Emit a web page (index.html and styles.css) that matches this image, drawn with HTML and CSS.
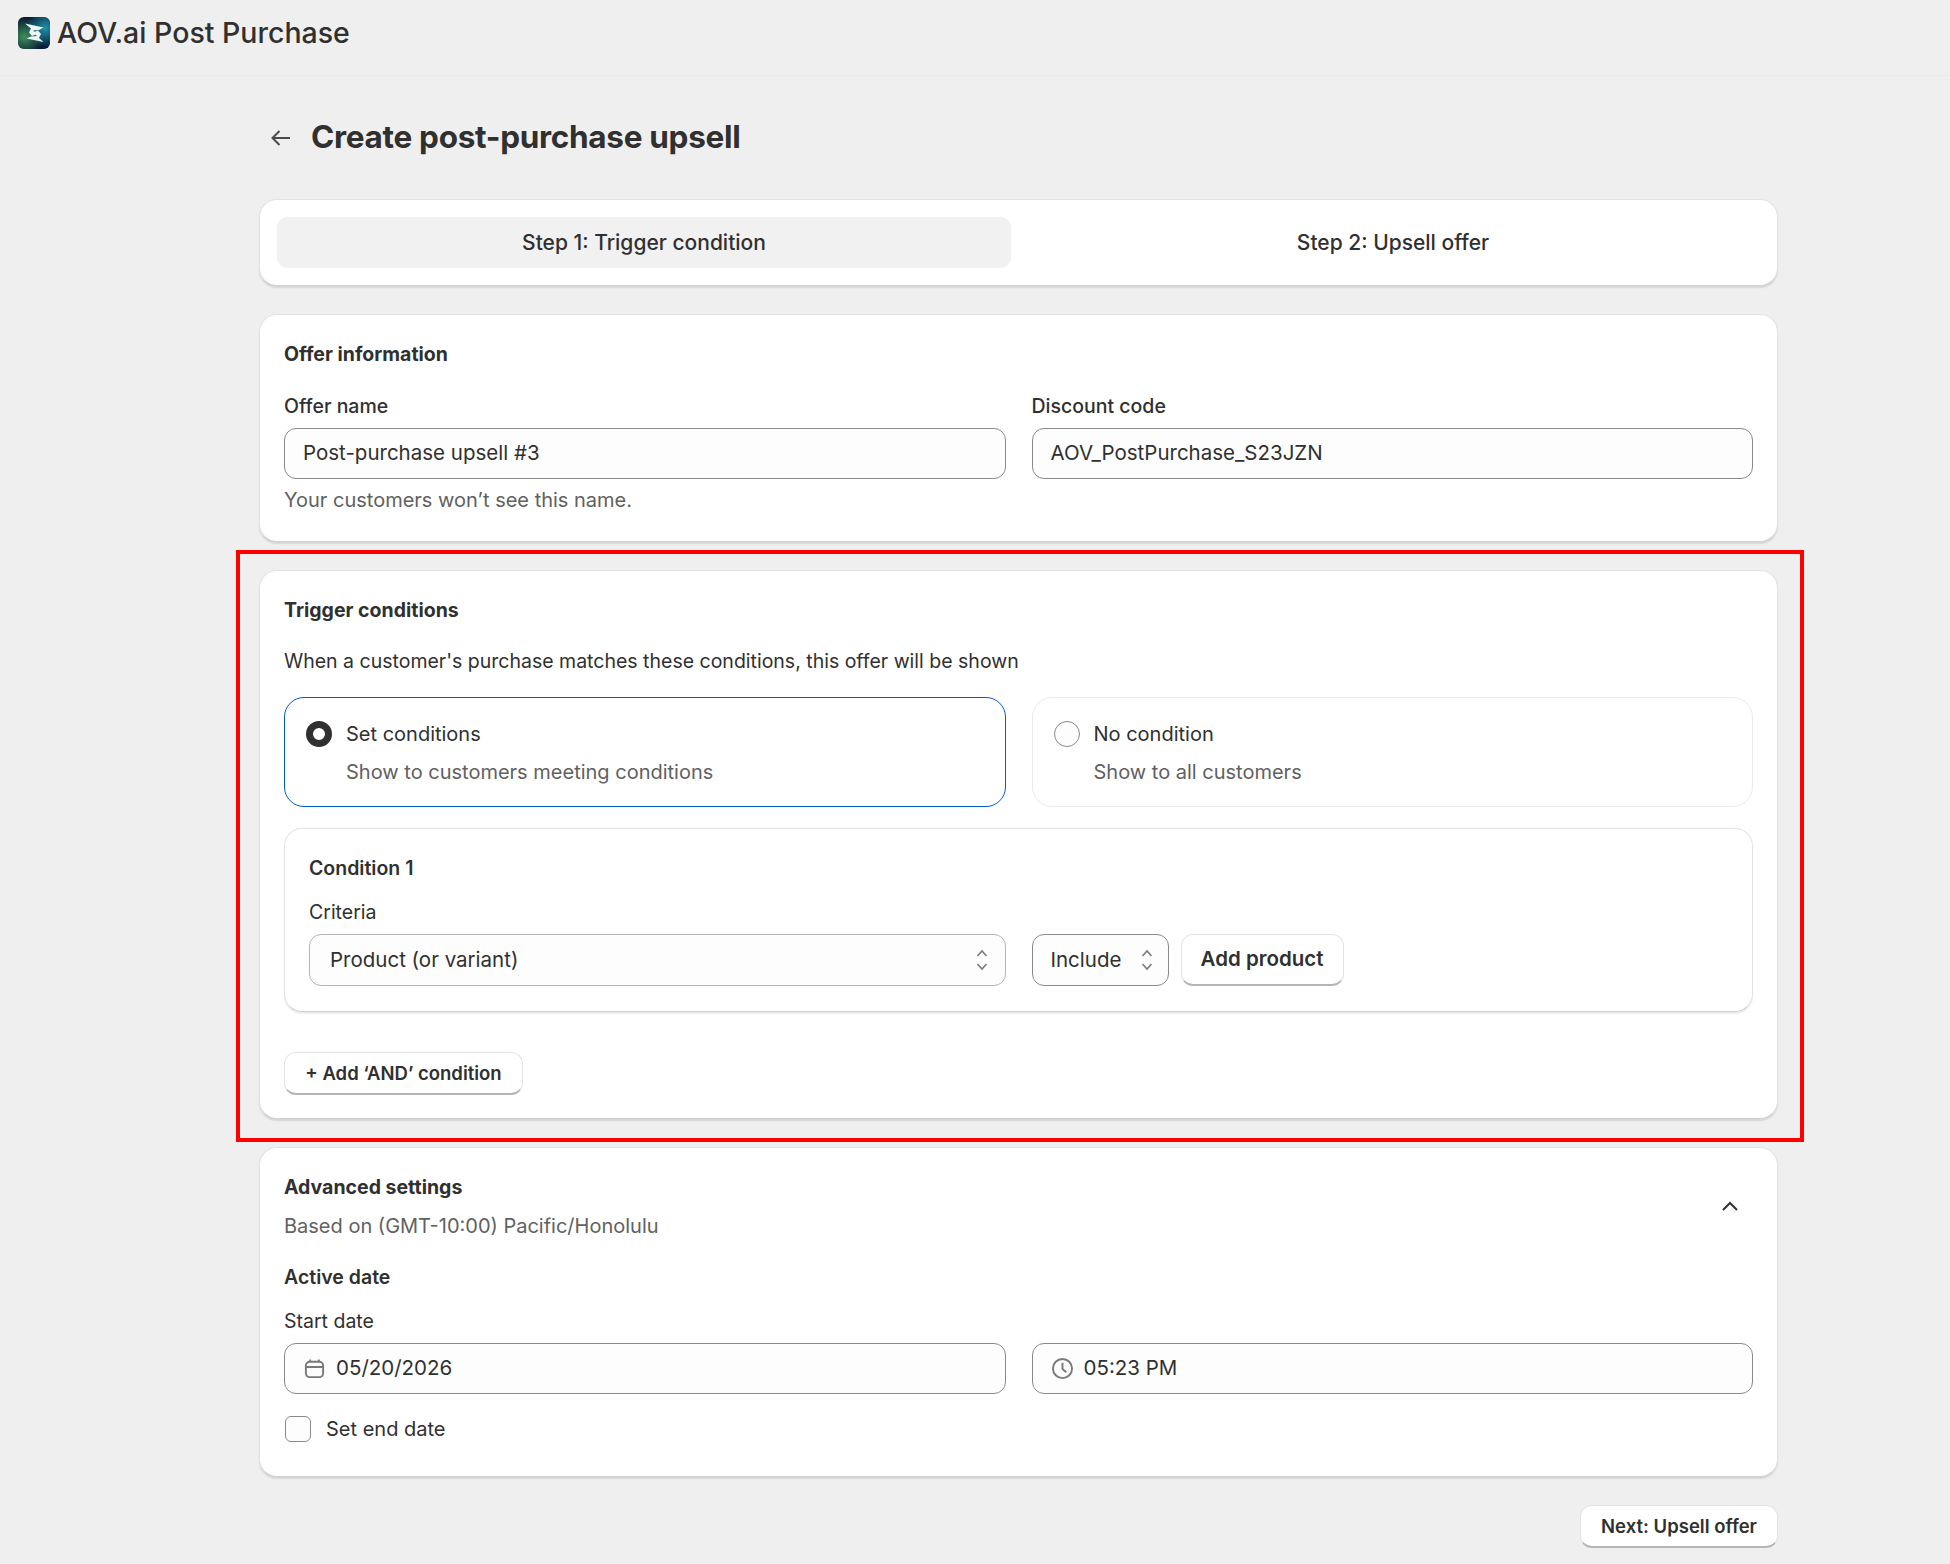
FILE: index.html
```html
<!DOCTYPE html>
<html lang="en">
<head>
  <meta charset="UTF-8">
  <meta name="viewport" content="width=device-width, initial-scale=1">
  <title>AOV.ai Post Purchase</title>
  <link rel="stylesheet" href="styles.css">
</head>
<body>

<header class="app-bar">
  <svg class="app-logo" viewBox="0 0 32 32" aria-hidden="true">
    <defs>
      <radialGradient id="logo-green" cx="0.2" cy="0.62" r="0.6">
        <stop offset="0" stop-color="#3f8f5a"/>
        <stop offset="1" stop-color="#3f8f5a" stop-opacity="0"/>
      </radialGradient>
      <radialGradient id="logo-blue" cx="0.85" cy="0.35" r="0.6">
        <stop offset="0" stop-color="#1f93a8"/>
        <stop offset="1" stop-color="#1f93a8" stop-opacity="0"/>
      </radialGradient>
    </defs>
    <rect width="32" height="32" rx="6" fill="#071a33"/>
    <rect width="32" height="32" rx="6" fill="url(#logo-green)"/>
    <rect width="32" height="32" rx="6" fill="url(#logo-blue)"/>
    <path d="M7 6.5 L25.5 10.5 L21 13 L15 13.5 L19.5 17 L14 19 L11 15.5 L13 11.5 Z" fill="#eef6f5"/>
    <path d="M25.5 25 L8.5 21.5 L13 19.5 L19 19 L15 15.5 L20 13.5 L23 17 L21 21 Z" fill="#eef6f5"/>
  </svg>
  <span class="app-name">AOV.ai Post Purchase</span>
</header>

<main class="page">
  <div class="page-head">
    <svg class="back-icon" viewBox="0 0 24 24" aria-hidden="true"><path d="M21 12H4M10.5 5 3.5 12l7 7"/></svg>
    <h1 class="page-title">Create post-purchase upsell</h1>
  </div>

  <section class="card steps">
    <div class="step step-active">Step 1: Trigger condition</div>
    <div class="step">Step 2: Upsell offer</div>
  </section>

  <section class="card offer-card">
    <h2 class="card-title">Offer information</h2>
    <div class="two-col offer-fields">
      <div>
        <label class="field-label">Offer name</label>
        <div class="input">Post-purchase upsell #3</div>
        <p class="help">Your customers won’t see this name.</p>
      </div>
      <div>
        <label class="field-label">Discount code</label>
        <div class="input">AOV_PostPurchase_S23JZN</div>
      </div>
    </div>
  </section>

  <section class="card trigger-card">
    <h2 class="card-title">Trigger conditions</h2>
    <p class="trigger-text">When a customer's purchase matches these conditions, this offer will be shown</p>
    <div class="two-col">
      <div class="choice choice-on">
        <span class="radio radio-on"></span>
        <div>
          <div class="choice-name">Set conditions</div>
          <div class="choice-sub">Show to customers meeting conditions</div>
        </div>
      </div>
      <div class="choice">
        <span class="radio"></span>
        <div>
          <div class="choice-name">No condition</div>
          <div class="choice-sub">Show to all customers</div>
        </div>
      </div>
    </div>

    <div class="condition">
      <h3 class="condition-title">Condition 1</h3>
      <label class="field-label criteria-label">Criteria</label>
      <div class="two-col">
        <div class="select select-wide">
          <span>Product (or variant)</span>
          <svg class="updown" viewBox="0 0 16 26" aria-hidden="true"><path d="M3.5 9 8 4l4.500 5M3.500 17 8 22l4.500-5"/></svg>
        </div>
        <div class="condition-actions">
          <div class="select select-small">
            <span>Include</span>
            <svg class="updown" viewBox="0 0 16 26" aria-hidden="true"><path d="M3.500 9 8 4l4.500 5M3.500 17 8 22l4.500-5"/></svg>
          </div>
          <button class="btn btn-add">Add product</button>
        </div>
      </div>
    </div>

    <button class="btn btn-and">+ Add ‘AND’ condition</button>
  </section>

  <section class="card advanced-card">
    <div class="advanced-head">
      <div>
        <h2 class="card-title">Advanced settings</h2>
        <p class="timezone">Based on (GMT-10:00) Pacific/Honolulu</p>
      </div>
      <svg class="chevron" viewBox="0 0 18 12" aria-hidden="true"><path d="M2 10 9 3l7 7"/></svg>
    </div>
    <h3 class="active-title">Active date</h3>
    <label class="field-label start-label">Start date</label>
    <div class="two-col">
      <div class="input input-icon">
        <svg class="field-icon" viewBox="0 0 24 24" aria-hidden="true"><rect x="3" y="5" width="18" height="16" rx="4"/><path d="M3 10.500h18M7.500 5V2.500M16.500 5V2.500"/></svg>
        05/20/2026
      </div>
      <div class="input input-icon">
        <svg class="field-icon" viewBox="0 0 24 24" aria-hidden="true"><circle cx="12" cy="12" r="10"/><path d="M12 6v6.500l4 3.500"/></svg>
        05:23 PM
      </div>
    </div>
    <label class="check-row">
      <span class="check-box"></span>
      Set end date
    </label>
  </section>

  <div class="page-foot">
    <button class="btn btn-next">Next: Upsell offer</button>
  </div>
</main>

<div class="highlight"></div>

</body>
</html>
```

FILE: styles.css
```css
* {
  box-sizing: border-box;
}

body {
  font-family: Inter, 'Noto Sans', sans-serif;
  font-size: 19.5px;
  line-height: 30px;
  color: #303030;
  background: #efefef;
  margin: 0;
  height: 1564px;
  overflow: hidden;
  position: relative;
}

h1, h2, h3, p {
  margin: 0;
}

.app-bar {
  height: 76px;
  border-bottom: 1px solid #ebebeb;
  display: flex;
  align-items: center;
  padding: 0 0 10px 18px;
  gap: 7px;
}

.app-logo {
  width: 32px;
  height: 32px;
  flex: none;
}

.app-name {
  font-size: 28.500px;
  font-weight: 500;
  line-height: 34px;
}

.page {
  margin: 0 172px 0 259px;
}

.page-head {
  height: 123px;
  display: flex;
  align-items: center;
  padding-left: 10px;
  gap: 18px;
}

.back-icon {
  width: 24px;
  height: 24px;
  fill: none;
  stroke: #4a4a4a;
  stroke-width: 2;
}

.page-title {
  font-size: 31.500px;
  font-weight: 700;
  line-height: 40px;
  letter-spacing: -0.3px;
  margin-top: -2px;
}

.card {
  background: #fff;
  border: 1.5px solid #e3e3e3;
  border-bottom-color: #d0d0d0;
  border-radius: 18px;
  box-shadow: 0 1.500px 1.500px rgba(0, 0, 0, 0.1);
  padding: 23.500px 24px 25px;
  margin-bottom: 28px;
}

.card-title {
  font-size: 19.500px;
  font-weight: 650;
}

.two-col {
  display: grid;
  grid-template-columns: 1fr 1fr;
  gap: 26px;
}

.steps {
  display: grid;
  grid-template-columns: 1fr 1fr;
  gap: 15px;
  padding: 17px 17px 17px;
  height: 87px;
}

.step {
  border-radius: 10px;
  display: flex;
  align-items: center;
  justify-content: center;
  font-weight: 550;
  font-size: 21px;
}

.step-active {
  background: #f1f1f1;
}

.offer-card {
  height: 228px;
}

.offer-fields {
  margin-top: 22px;
}

.field-label {
  display: block;
  font-weight: 500;
}

.input {
  height: 51px;
  margin-top: 7px;
  border: 1.500px solid #8a8a8a;
  border-radius: 12px;
  background: #fdfdfd;
  padding: 0 18px;
  display: flex;
  align-items: center;
  font-size: 20.500px;
}

.help {
  margin-top: 6px;
  color: #616161;
  font-size: 20px;
}

.trigger-card {
  height: 549px;
  margin-bottom: 28px;
}

.trigger-text {
  margin-top: 21px;
  margin-bottom: 21px;
}

.choice {
  height: 110px;
  border: 1.500px solid #ebebeb;
  border-radius: 20px;
  padding: 21px 21px;
  display: flex;
  gap: 14px;
}

.choice-on {
  border-color: #005bd3;
}

.radio {
  width: 26px;
  height: 26px;
  margin-top: 2px;
  flex: none;
  border-radius: 50%;
  border: 1.500px solid #8a8a8a;
  background: #fdfdfd;
}

.radio-on {
  border: 7px solid #303030;
  background: #fff;
}

.choice-name {
  font-size: 20px;
}

.choice-sub {
  margin-top: 8px;
  color: #616161;
  font-size: 20px;
}

.condition {
  margin-top: 21px;
  height: 184px;
  border: 1.500px solid #e3e3e3;
  border-bottom-color: #d0d0d0;
  border-radius: 18px;
  box-shadow: 0 1.500px 1.500px rgba(0, 0, 0, 0.08);
  padding: 24px 24px 0;
}

.condition-title {
  font-size: 19.500px;
  font-weight: 600;
}

.criteria-label {
  margin-top: 14px;
  font-weight: 400;
}

.select {
  height: 52px;
  margin-top: 7px;
  border-radius: 12px;
  background: #fdfdfd;
  display: flex;
  align-items: center;
  justify-content: space-between;
  font-size: 20.500px;
}

.select-wide {
  border: 1.500px solid #b5b5b5;
  padding: 0 15px 0 20px;
}

.select-small {
  width: 137px;
  flex: none;
  border: 1.500px solid #8a8a8a;
  padding: 0 13px 0 18px;
}

.updown {
  width: 16px;
  height: 26px;
  fill: none;
  stroke: #7a7a7a;
  stroke-width: 1.600;
}

.condition-actions {
  display: flex;
  gap: 12px;
}

.btn {
  font: inherit;
  font-weight: 600;
  color: #303030;
  background: #fff;
  border: 1.500px solid #e3e3e3;
  border-bottom: 2.500px solid #b5b5b5;
  border-radius: 12px;
  padding: 0;
}

.btn-add {
  width: 163px;
  height: 52px;
  margin-top: 7px;
  font-size: 20.500px;
}

.btn-and {
  width: 239px;
  height: 43px;
  margin-top: 40px;
  font-size: 18.500px;
}

.advanced-card {
  height: 330px;
  margin-bottom: 28px;
}

.advanced-head {
  display: flex;
  align-items: center;
  justify-content: space-between;
  padding-right: 14px;
}

.timezone {
  margin-top: 9px;
  color: #616161;
  font-size: 20px;
}

.chevron {
  width: 18px;
  height: 12px;
  fill: none;
  stroke: #303030;
  stroke-width: 2;
}

.active-title {
  margin-top: 21px;
  font-size: 19.500px;
  font-weight: 600;
}

.start-label {
  margin-top: 14px;
  font-weight: 400;
}

.input-icon {
  gap: 10px;
  padding-left: 18px;
}

.field-icon {
  width: 23px;
  height: 23px;
  fill: none;
  stroke: #7a7a7a;
  stroke-width: 2;
}

.check-row {
  display: flex;
  align-items: center;
  gap: 15px;
  margin-top: 20px;
  font-size: 20px;
}

.check-box {
  width: 26px;
  height: 26px;
  margin-left: 1px;
  border: 1.500px solid #8a8a8a;
  border-radius: 6px;
  background: #fdfdfd;
}

.page-foot {
  display: flex;
  justify-content: flex-end;
}

.btn-next {
  width: 198px;
  height: 43px;
  font-size: 18.500px;
}

.highlight {
  position: absolute;
  left: 236px;
  top: 550px;
  width: 1568px;
  height: 592px;
  border: 4px solid #ff0000;
  pointer-events: none;
}
```
